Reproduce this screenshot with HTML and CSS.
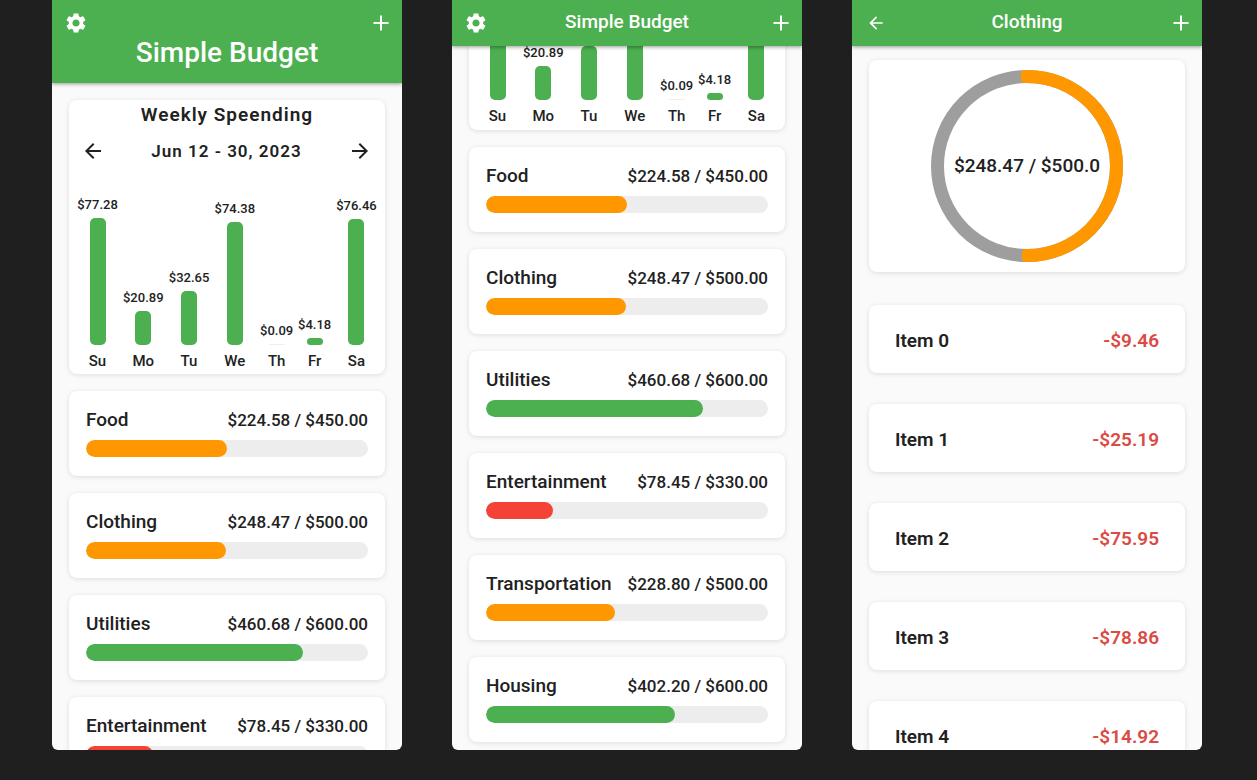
FILE: index.html
```html
<!DOCTYPE html>
<html lang="en">
<head>
<meta charset="utf-8">
<meta name="viewport" content="width=device-width, initial-scale=1">
<title>Simple Budget</title>
<link rel="stylesheet" href="styles.css">
</head>
<body>
<svg class="sprite" aria-hidden="true">
  <symbol id="gear" viewBox="0 0 24 24"><path d="M19.14 12.94c.04-.3.06-.61.06-.94 0-.32-.02-.64-.07-.94l2.03-1.58c.18-.14.23-.41.12-.61l-1.92-3.32c-.12-.22-.37-.29-.59-.22l-2.39.96c-.5-.38-1.03-.7-1.62-.94l-.36-2.54c-.04-.24-.24-.41-.48-.41h-3.84c-.24 0-.43.17-.47.41l-.36 2.54c-.59.24-1.13.57-1.62.94l-2.39-.96c-.22-.08-.47 0-.59.22L2.74 8.87c-.12.21-.08.47.12.61l2.03 1.58c-.05.3-.09.63-.09.94s.02.64.07.94l-2.03 1.58c-.18.14-.23.41-.12.61l1.92 3.32c.12.22.37.29.59.22l2.39-.96c.5.38 1.03.7 1.62.94l.36 2.54c.05.24.24.41.48.41h3.84c.24 0 .44-.17.47-.41l.36-2.54c.59-.24 1.13-.56 1.62-.94l2.39.96c.22.08.47 0 .59-.22l1.92-3.32c.12-.22.07-.47-.12-.61l-2.01-1.58zM12 15.6c-1.98 0-3.6-1.62-3.6-3.6s1.62-3.6 3.6-3.6 3.6 1.62 3.6 3.6-1.62 3.6-3.6 3.6z"/></symbol>
  <symbol id="plus" viewBox="0 0 24 24"><path d="M19.500 13h-6.500v6.500h-2v-6.500H4.500v-2h6.500V4.500h2v6.500h6.500v2z"/></symbol>
  <symbol id="back" viewBox="0 0 24 24"><path d="M20 11H7.830l5.590-5.590L12 4l-8 8 8 8 1.410-1.410L7.830 13H20v-2z"/></symbol>
  <symbol id="forward" viewBox="0 0 24 24"><path d="M12 4l-1.410 1.410L16.170 11H4v2h12.170l-5.580 5.590L12 20l8-8z"/></symbol>
</svg>
<main class="screens">

  <section class="phone">
    <header class="bar bar-large">
      <button class="icon-btn" aria-label="Settings"><svg><use href="#gear"/></svg></button>
      <h1 class="bar-title">Simple Budget</h1>
      <button class="icon-btn" aria-label="Add"><svg><use href="#plus"/></svg></button>
    </header>
    <div class="content">
      <article class="card chart-card">
        <h2 class="chart-title">Weekly Speending</h2>
        <div class="range">
          <button class="range-btn" aria-label="Previous week"><svg><use href="#back"/></svg></button>
          <span>Jun 12 - 30, 2023</span>
          <button class="range-btn" aria-label="Next week"><svg><use href="#forward"/></svg></button>
        </div>
        <ul class="chart">
          <li><span class="amount">$77.28</span><i class="column" style="height:127px"></i><span class="day">Su</span></li>
          <li><span class="amount">$20.89</span><i class="column" style="height:34px"></i><span class="day">Mo</span></li>
          <li><span class="amount">$32.65</span><i class="column" style="height:54px"></i><span class="day">Tu</span></li>
          <li><span class="amount">$74.38</span><i class="column" style="height:123px"></i><span class="day">We</span></li>
          <li><span class="amount">$0.09</span><i class="column empty"></i><span class="day">Th</span></li>
          <li><span class="amount">$4.18</span><i class="column" style="height:7px"></i><span class="day">Fr</span></li>
          <li><span class="amount">$76.46</span><i class="column" style="height:126px"></i><span class="day">Sa</span></li>
        </ul>
      </article>
      <article class="card budget"><h3>Food</h3><span>$224.58 / $450.00</span><div class="track"><div class="fill mid" style="width:50%"></div></div></article>
      <article class="card budget"><h3>Clothing</h3><span>$248.47 / $500.00</span><div class="track"><div class="fill mid" style="width:49.7%"></div></div></article>
      <article class="card budget"><h3>Utilities</h3><span>$460.68 / $600.00</span><div class="track"><div class="fill high" style="width:76.8%"></div></div></article>
      <article class="card budget"><h3>Entertainment</h3><span>$78.45 / $330.00</span><div class="track"><div class="fill low" style="width:23.8%"></div></div></article>
    </div>
  </section>

  <section class="phone">
    <header class="bar">
      <button class="icon-btn" aria-label="Settings"><svg><use href="#gear"/></svg></button>
      <h1 class="bar-title">Simple Budget</h1>
      <button class="icon-btn" aria-label="Add"><svg><use href="#plus"/></svg></button>
    </header>
    <div class="content scrolled-end">
      <article class="card chart-card">
        <ul class="chart">
          <li><i class="column" style="height:127px"></i><span class="day">Su</span></li>
          <li><span class="amount">$20.89</span><i class="column" style="height:34px"></i><span class="day">Mo</span></li>
          <li><i class="column" style="height:54px"></i><span class="day">Tu</span></li>
          <li><i class="column" style="height:123px"></i><span class="day">We</span></li>
          <li><span class="amount">$0.09</span><i class="column empty"></i><span class="day">Th</span></li>
          <li><span class="amount">$4.18</span><i class="column" style="height:7px"></i><span class="day">Fr</span></li>
          <li><i class="column" style="height:126px"></i><span class="day">Sa</span></li>
        </ul>
      </article>
      <article class="card budget"><h3>Food</h3><span>$224.58 / $450.00</span><div class="track"><div class="fill mid" style="width:50%"></div></div></article>
      <article class="card budget"><h3>Clothing</h3><span>$248.47 / $500.00</span><div class="track"><div class="fill mid" style="width:49.7%"></div></div></article>
      <article class="card budget"><h3>Utilities</h3><span>$460.68 / $600.00</span><div class="track"><div class="fill high" style="width:76.8%"></div></div></article>
      <article class="card budget"><h3>Entertainment</h3><span>$78.45 / $330.00</span><div class="track"><div class="fill low" style="width:23.8%"></div></div></article>
      <article class="card budget"><h3>Transportation</h3><span>$228.80 / $500.00</span><div class="track"><div class="fill mid" style="width:45.8%"></div></div></article>
      <article class="card budget"><h3>Housing</h3><span>$402.20 / $600.00</span><div class="track"><div class="fill high" style="width:67%"></div></div></article>
    </div>
  </section>

  <section class="phone">
    <header class="bar">
      <button class="icon-btn icon-small" aria-label="Back"><svg><use href="#back"/></svg></button>
      <h1 class="bar-title">Clothing</h1>
      <button class="icon-btn" aria-label="Add"><svg><use href="#plus"/></svg></button>
    </header>
    <div class="content detail">
      <article class="card donut-card">
        <svg class="donut" viewBox="0 0 192 192" aria-hidden="true">
          <circle cx="96" cy="96" r="89.5" fill="none" stroke="#9e9e9e" stroke-width="13"/>
          <path d="M94 0H96A96 96 0 0 1 96 192L95 192Q91 192 91 188V183Q91 179 95 179L96 179A83 83 0 0 0 96 13H94Q90 13 90 9V4Q90 0 94 0Z" fill="#ff9800"/>
        </svg>
        <span class="donut-label">$248.47 / $500.0</span>
      </article>
      <ul class="items">
        <li class="card item"><span>Item 0</span><span class="spent">-$9.46</span></li>
        <li class="card item"><span>Item 1</span><span class="spent">-$25.19</span></li>
        <li class="card item"><span>Item 2</span><span class="spent">-$75.95</span></li>
        <li class="card item"><span>Item 3</span><span class="spent">-$78.86</span></li>
        <li class="card item"><span>Item 4</span><span class="spent">-$14.92</span></li>
      </ul>
    </div>
  </section>

</main>
</body>
</html>
```
FILE: styles.css
```css
* { box-sizing: border-box; }

body {
  margin: 0;
  background: #1f1f1f;
  color: #212121;
  font-family: Roboto, "Liberation Sans", sans-serif;
  font-weight: 500;
}

h1, h2, h3, ul { margin: 0; padding: 0; font-weight: 500; }
ul { list-style: none; }
button { border: 0; padding: 0; background: none; color: inherit; cursor: pointer; }
svg { display: block; fill: currentColor; }

.sprite { display: none; }

.screens {
  display: grid;
  grid-template-columns: repeat(3, minmax(0, 1fr));
  gap: 50px;
  height: 100vh;
  padding: 0 55px 30px 52px;
}

.phone {
  display: flex;
  flex-direction: column;
  min-height: 0;
  overflow: hidden;
  border-radius: 0 0 6px 6px;
  background: #fafafa;
}

/* App bar */
.bar {
  z-index: 1;
  flex: none;
  display: grid;
  grid-template-columns: 27px 1fr 27px;
  align-items: center;
  justify-items: end;
  padding: 0 9px;
  height: 46px;
  background: #4caf50;
  color: #fff;
  box-shadow: 0 1px 4px rgba(0, 0, 0, .4);
}
.bar-title {
  justify-self: center;
  padding-bottom: 2px;
  font-size: 19px;
  line-height: 24px;
}
.bar-large {
  grid-template-columns: 27px 27px;
  grid-template-rows: 46px 16px;
  align-content: start;
  justify-content: space-between;
  height: 83px;
}
.bar-large .bar-title {
  grid-row: 2;
  grid-column: 1 / -1;
  font-size: 28px;
  line-height: 32px;
}
.icon-btn svg { width: 24px; height: 24px; }
.icon-small svg { width: 20px; height: 20px; margin: 0 2px; }

/* Scrolling area */
.content {
  flex: 1;
  min-height: 0;
  overflow: hidden;
  display: flex;
  flex-direction: column;
  gap: 17px;
  padding: 17px 17px 8px;
}
.scrolled-end { justify-content: flex-end; }
.detail { gap: 33px; padding-top: 14px; }

.card {
  flex: none;
  border-radius: 8px;
  background: #fff;
  box-shadow: 0 1px 5px rgba(0, 0, 0, .12);
}

/* Weekly chart */
.chart-title {
  font-size: 19px;
  font-weight: 600;
  line-height: 30px;
  letter-spacing: 1px;
  text-align: center;
}
.range {
  display: flex;
  align-items: center;
  justify-content: space-between;
  height: 42px;
  padding: 0 13px 0 12px;
  font-size: 17px;
  font-weight: 600;
  letter-spacing: 1px;
}
.range-btn svg { width: 24px; height: 24px; }
.chart {
  display: flex;
  align-items: flex-end;
  justify-content: space-between;
  height: 202px;
  padding: 0 8px 3px;
}
.scrolled-end .chart { padding-bottom: 4px; }
.chart li {
  display: flex;
  flex-direction: column;
  align-items: center;
  min-width: 41px;
}
.chart li:nth-child(5), .chart li:nth-child(6) { min-width: 33px; }
.amount { font-size: 13px; line-height: 16px; padding-bottom: 5px; }
.column { width: 16px; border-radius: 5px; background: #4caf50; }
.column.empty { height: 1px; background: #eee; }
.day { font-size: 15px; line-height: 20px; padding-top: 6px; }

/* Budgets */
.budget {
  display: grid;
  grid-template-columns: 1fr auto;
  align-items: center;
  row-gap: 8px;
  padding: 17px 17px 19px;
}
.budget h3, .budget span { font-size: 17px; line-height: 24px; }
.budget h3 { font-size: 19px; }
.track {
  grid-column: 1 / -1;
  height: 17px;
  border-radius: 9px;
  background: #ededed;
  overflow: hidden;
}
.fill { height: 100%; border-radius: 9px; }
.low { background: #f44336; }
.mid { background: #ff9800; }
.high { background: #4caf50; }

/* Category detail */
.donut-card {
  display: grid;
  place-items: center;
  padding: 10px 0;
}
.donut, .donut-label { grid-area: 1 / 1; }
.donut { width: 192px; height: 192px; }
.donut-label { font-size: 19px; line-height: 24px; }
.items { display: grid; gap: 31px; }
.item {
  display: flex;
  justify-content: space-between;
  padding: 24px 26px 20px;
  font-size: 19px;
  line-height: 24px;
}
.item span { font-weight: 600; }
.spent { color: #db4a43; }
```
